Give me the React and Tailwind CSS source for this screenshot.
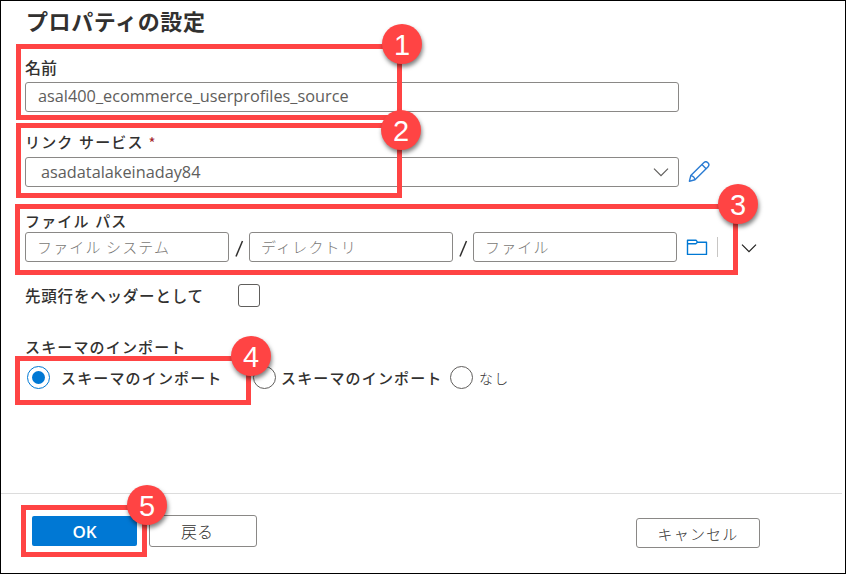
import React from "react";

const JP = "font-['Noto_Sans_CJK_JP',sans-serif]";
const LATIN = "font-['Open_Sans','Noto_Sans_CJK_JP',sans-serif]";
const KANA = "text-[15px] tracking-[1.15px]";

function Callout({ n, box, badge }) {
  return (
    <>
      <div className={`absolute border-5 border-[#ff4444] ${box}`} />
      <div
        className={`absolute z-10 flex size-10 items-center justify-center rounded-full bg-[#ff4444] font-['Liberation_Sans',Arial,sans-serif] text-[29px] leading-none text-white shadow-[1px_3px_4px_rgba(0,0,0,0.5)] ${badge}`}
      >
        <span className="pt-[2px]">{n}</span>
      </div>
    </>
  );
}

function Field({ children, className = "" }) {
  return (
    <div className={`flex h-[30px] shrink-0 items-center rounded-[3px] border border-[#8a8886] bg-white ${className}`}>
      {children}
    </div>
  );
}

function PathField({ children }) {
  return (
    <Field className={`w-[204px] pb-px pl-[11px] font-light text-[#7a7876] ${KANA}`}>{children}</Field>
  );
}

function Slash() {
  return (
    <svg viewBox="0 0 20 30" className="h-[30px] w-5 shrink-0" fill="none" stroke="#323130" strokeWidth="1.5">
      <path d="M7 24.5 13.5 9" />
    </svg>
  );
}

function Chevron({ className }) {
  return (
    <svg viewBox="0 0 16 10" className={`h-2.5 w-4 shrink-0 ${className}`} fill="none" stroke="currentColor" strokeWidth="1.2">
      <path d="M1 1.6 8 8.6 15 1.6" />
    </svg>
  );
}

function Radio({ checked = false }) {
  return (
    <span
      className={`flex size-[23px] shrink-0 items-center justify-center rounded-full border bg-white ${checked ? "border-[#0078d4]" : "border-[#605e5c]"}`}
    >
      {checked && <span className="size-[13px] rounded-full bg-[#0078d4]" />}
    </span>
  );
}

export default function App() {
  return (
    <div className={`relative flex h-[574px] w-[846px] flex-col overflow-hidden border border-black bg-white leading-none text-[#323130] ${JP}`}>
      <main className="flex h-[492px] flex-col pl-6">
        <h1 className="flex h-[56px] items-center pb-[18px] pl-px text-[22px] font-bold tracking-[0.6px]">プロパティの設定</h1>
        <label className="flex h-[25px] items-center pb-[5px] text-[16px] font-medium">名前</label>
        <Field className="w-[654px] pb-px pl-[12px]">
          <span className={`${LATIN} text-[16.3px] text-[#605e5c]`}>asal400_ecommerce_userprofiles_source</span>
        </Field>

        <label className={`mt-[18px] flex h-[27px] items-center whitespace-pre pb-[4px] font-medium [word-spacing:1px] ${KANA}`}>
          リンク サービス<span className="ml-[5px] pt-[2px] text-[15px] font-normal text-[#a4262c]">*</span>
        </label>
        <div className="flex items-center">
          <Field className="w-[654px] justify-between pl-[15px] pr-[9px]">
            <span className={`${LATIN} text-[16.3px] text-[#605e5c]`}>asadatalakeinaday84</span>
            <Chevron className="text-[#605e5c]" />
          </Field>
          <svg viewBox="0 0 22 22" className="ml-[9px] size-[22px]" fill="none" stroke="#2b7cd3" strokeWidth="1.4" strokeLinejoin="round">
            <path d="M1.4 20.2 2.8 14.6 15.7 1.7a2.9 2.9 0 0 1 4.2 4.2L7 18.8Z" />
            <path d="m13.9 3.5 4.2 4.2M2.8 14.6q3.6.6 4.2 4.2" />
          </svg>
        </div>

        <label className={`mt-[24px] flex h-[21px] items-center whitespace-pre pb-[2px] font-medium [word-spacing:1px] ${KANA}`}>ファイル パス</label>
        <div className="flex items-center">
          <PathField>ファイル システム</PathField>
          <Slash />
          <PathField>ディレクトリ</PathField>
          <Slash />
          <PathField>ファイル</PathField>
          <svg viewBox="0 0 22 18" className="ml-[9px] h-[18px] w-[22px]" fill="none" stroke="#0078d4" strokeWidth="1.4" strokeLinejoin="round">
            <path d="M1.5 2.2H10l1.5 2h9v12.2h-19Z" />
            <path d="M1.5 5.7h8.3l1.7-1.5" />
          </svg>
          <span className="ml-[9px] h-5 w-px bg-[#c8c6c4]" />
          <Chevron className="ml-[23px] mt-[2px] text-[#201f1e]" />
        </div>

        <div className="mt-[22px] flex h-[23px] items-center">
          <span className="w-[213px] pt-px text-[15.5px] font-medium tracking-[0.8px]">先頭行をヘッダーとして</span>
          <span className="h-[23px] w-[22px] rounded-[3px] border border-[#605e5c]" />
        </div>

        <div className={`mt-[29px] flex h-[24px] items-center pb-[3px] font-medium ${KANA}`}>スキーマのインポート</div>
        <div className={`mt-[6px] flex h-[23px] items-center pl-[2px] ${KANA}`}>
          <Radio checked />
          <span className="ml-[11px] w-[192px] font-medium">スキーマのインポート</span>
          <Radio />
          <span className="ml-[5px] w-[169px] font-medium">スキーマのインポート</span>
          <Radio />
          <span className="ml-[6px] text-[14px] font-light">なし</span>
        </div>
      </main>

      <footer className="mr-[3px] flex grow items-start border-t border-[#dcdcdc] pl-[31px]">
        <button className={`mt-[22px] h-[30px] w-[105px] rounded-[2px] bg-[#0078d4] pt-px text-[17px] font-semibold text-white ${LATIN}`}>OK</button>
        <button className="ml-3 mt-[21px] h-[32px] w-[108px] rounded-[3px] border border-[#8a8886] pr-3 text-[16px] font-light">戻る</button>
        <button className={`ml-[379px] mt-[24px] h-[30px] w-[124px] rounded-[3px] border border-[#8a8886] font-light ${KANA}`}>キャンセル</button>
      </footer>

      <Callout n="1" box="left-[15px] top-[43px] h-[76px] w-[386px]" badge="left-[381px] top-[23px]" />
      <Callout n="2" box="left-[15px] top-[122px] h-[75px] w-[386px]" badge="left-[380px] top-[109px]" />
      <Callout n="3" box="left-[14px] top-[203px] h-[71px] w-[723px]" badge="left-[717px] top-[183px]" />
      <Callout n="4" box="left-[14px] top-[355px] h-[49px] w-[236px]" badge="left-[230px] top-[335px]" />
      <Callout n="5" box="left-[20px] top-[504px] h-[52px] w-[126px]" badge="left-[126px] top-[484px]" />
    </div>
  );
}
